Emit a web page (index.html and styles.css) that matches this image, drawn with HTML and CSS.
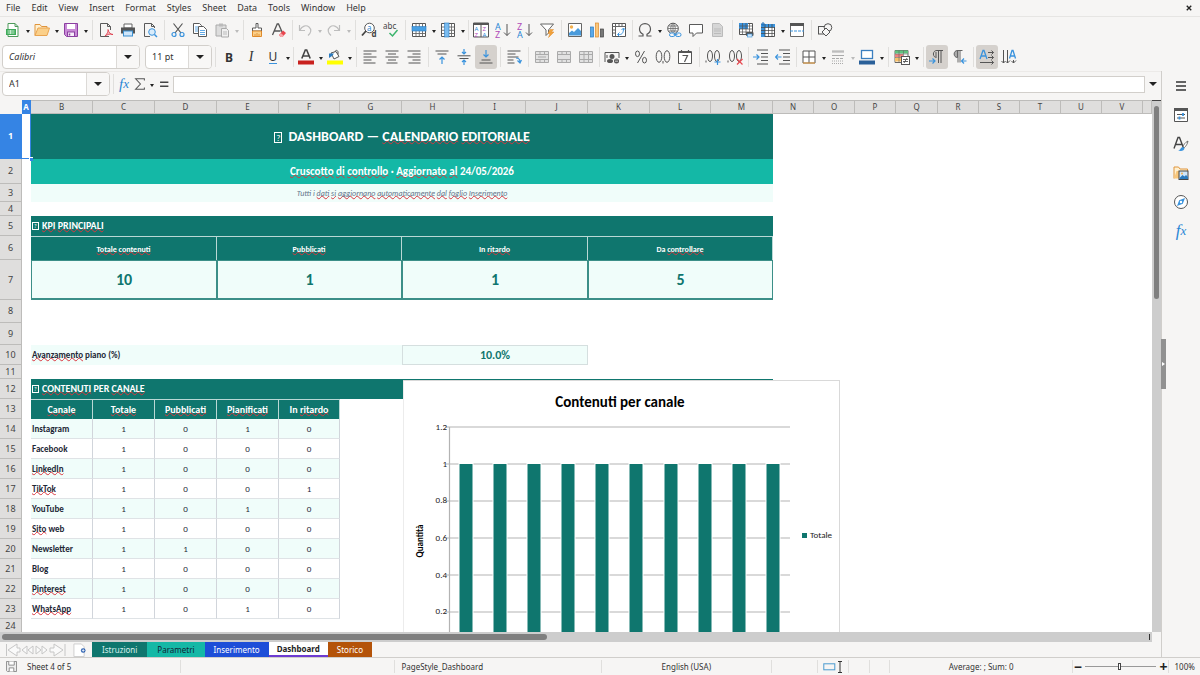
FILE: index.html
```
<!DOCTYPE html>
<html lang="it">
<head>
<meta charset="utf-8">
<title>Dashboard - Calendario editoriale</title>
<link rel="stylesheet" href="styles.css">
</head>
<body>
<svg class="defs" aria-hidden="true">
  <symbol id="i-new" viewBox="0 0 16 16"><path d="M3 1.500h7l3 3v10H3z" fill="#fff" stroke="#4e9a5b"/><path d="M10 1.500v3h3" fill="none" stroke="#4e9a5b"/><rect x="1" y="7" width="10" height="6" fill="#3faa5a"/><path d="M2.500 9h7M2.500 11h7M5.500 8v4" stroke="#c8ecd0"/></symbol>
  <symbol id="i-open" viewBox="0 0 16 16"><path d="M1 13.500v-11h5l1.500 2H13v2" fill="#fff0d0" stroke="#e0953d"/><path d="M1 13.500l3-7.500h11.500l-2.500 7.500z" fill="#fbd08a" stroke="#e9a450"/></symbol>
  <symbol id="i-save" viewBox="0 0 16 16"><path d="M1.500 1.500h13v13h-11l-2-2z" fill="#c88ad6" stroke="#8b3fa0"/><rect x="4" y="2" width="8" height="5" fill="#fff"/><rect x="4.500" y="10" width="7" height="4.500" fill="#f7eefa" stroke="#8b3fa0"/><path d="M6.500 11.500v2" stroke="#8b3fa0" stroke-width="1.500"/></symbol>
  <symbol id="i-pdf" viewBox="0 0 16 16"><path d="M11 14.500H2.500v-13h7l3 3V8M9.500 1.500v3h3" fill="none" stroke="#5a5a5a"/><path d="M7 14c2-2 3.500-4.500 3-6.500 1 3.500 2.500 5 5 5-3-1-5.500 0-8 1.500z" fill="#f7b8bd" stroke="#dc3545" stroke-width=".8"/></symbol>
  <symbol id="i-print" viewBox="0 0 16 16"><path d="M4 2h8v4H4z" fill="#fff" stroke="#666"/><path d="M1 5.500h14v6H1z" fill="#555"/><rect x="3.500" y="9" width="9" height="5" fill="#cfe6fa" stroke="#3a8fd0"/></symbol>
  <symbol id="i-preview" viewBox="0 0 16 16"><path d="M8 14.500H2.500v-13h7l3 3V6M9.500 1.500v3h3" fill="none" stroke="#5a5a5a"/><circle cx="10" cy="10" r="3.300" fill="#d9ecfb" stroke="#3a93dd"/><path d="M12.500 12.500l2.500 2.500" stroke="#3a93dd" stroke-width="1.500"/></symbol>
  <symbol id="i-cut" viewBox="0 0 16 16"><path d="M3.500 1.500l7.500 9.500M12.500 1.500L5 11" fill="none" stroke="#555" stroke-width="1.200"/><circle cx="4" cy="12.500" r="2" fill="none" stroke="#3a93dd" stroke-width="1.200"/><circle cx="12" cy="12.500" r="2" fill="none" stroke="#3a93dd" stroke-width="1.200"/></symbol>
  <symbol id="i-copy" viewBox="0 0 16 16"><path d="M1.500 1.500h6l2 2v8h-8z" fill="#fff" stroke="#5a5a5a"/><path d="M6.500 4.500h5l3 3v7h-8z" fill="#fff" stroke="#5a5a5a"/><path d="M3 5h3M3 7h3M3 9h3M8 8.500h5M8 10.500h5M8 12.500h5" stroke="#3a93dd" stroke-width=".8"/></symbol>
  <symbol id="i-paste" viewBox="0 0 16 16"><path d="M2 3h10v11H2z" fill="#ddd" stroke="#aaa"/><rect x="5" y="1.500" width="4" height="3" fill="#bbb"/><path d="M7.500 6.500h5l2 2v6.500h-7z" fill="#f0f0f0" stroke="#aaa"/><path d="M9 10h4M9 12h4" stroke="#bbb"/></symbol>
  <symbol id="i-clone" viewBox="0 0 16 16"><path d="M7 1.500h2V6h3.500v3h-9V6H7z" fill="#fff" stroke="#5a5a5a"/><path d="M3.500 9h9v5.500h-9z" fill="#fbd08a" stroke="#e08a2a"/><path d="M6 12v2.500M8 11v3.500M10 12v2.500" stroke="#e08a2a" stroke-width=".8"/></symbol>
  <symbol id="i-clear" viewBox="0 0 16 16"><path d="M1.500 13L6.200 2h1.300l4 9M3.500 9h6" fill="none" stroke="#555" stroke-width="1.300"/><path d="M8 13l4-4.500 3 2.500-3.500 4H9.500z" fill="#e8474f"/><path d="M8 13l1.700-2 3 2.500-1.200 1.500h-2z" fill="#f7a7ab"/></symbol>
  <symbol id="i-undo" viewBox="0 0 16 16"><path d="M2.500 3v5.500H8M3 8c2-4 6-5.500 9-3s2 6-1 8.500" fill="none" stroke="#bdbdbd" stroke-width="1.200"/></symbol>
  <symbol id="i-redo" viewBox="0 0 16 16"><path d="M13.500 3v5.500H8M13 8C11 4 7 2.500 4 5s-2 6 1 8.500" fill="none" stroke="#bdbdbd" stroke-width="1.200"/></symbol>
  <symbol id="i-find" viewBox="0 0 16 16"><circle cx="8.500" cy="6" r="4.800" fill="#fff" stroke="#555"/><path d="M5 9l-4 4.500" stroke="#444" stroke-width="1.800"/><text x="6" y="8.500" class="gl blue">a</text><text x="10.500" y="15" class="gl b">d</text></symbol>
  <symbol id="i-spell" viewBox="0 0 16 16"><text x="0" y="7" class="gl">abc</text><path d="M6.500 11l3 3 5-6" fill="none" stroke="#3bb46c" stroke-width="1.500"/></symbol>
  <symbol id="i-row" viewBox="0 0 16 16"><path d="M1.500 1.500h13v13h-13z" fill="#fff" stroke="#555"/><path d="M5 1.500v13M8.300 1.500v13M11.500 1.500v13M1.500 11.500h13" stroke="#666" stroke-width=".9"/><rect x="1" y="4.500" width="14" height="4.500" fill="#48a0e4" stroke="#2a7bc0" stroke-width=".6"/></symbol>
  <symbol id="i-col" viewBox="0 0 16 16"><path d="M1.500 1.500h13v13h-13z" fill="#fff" stroke="#555"/><path d="M1.500 5h13M1.500 8.300h13M1.500 11.500h13M11.500 1.500v13" stroke="#666" stroke-width=".9"/><rect x="4.500" y="1" width="4.500" height="14" fill="#7abcf0" stroke="#2a7bc0" stroke-width=".6"/></symbol>
  <symbol id="i-sort" viewBox="0 0 16 16"><path d="M.5 1h15v14H.5z" fill="#fff" stroke="#555"/><path d="M.5 1.500h15v1H.5zM8 2.500v12.500" fill="#555" stroke="#555"/><text x="1.500" y="9" class="gs blue">A</text><text x="1.500" y="14.500" class="gs mag">Z</text><text x="9.500" y="9" class="gs mag">Z</text><text x="9.500" y="14.500" class="gs blue">A</text></symbol>
  <symbol id="i-az" viewBox="0 0 16 16"><text x="0" y="7.500" class="ga blue">A</text><text x="0" y="15.500" class="ga mag">Z</text><path d="M12 2v11.500M9 10.500L12 13.500l3-3" fill="none" stroke="#555"/></symbol>
  <symbol id="i-za" viewBox="0 0 16 16"><text x="0" y="7.500" class="ga mag">Z</text><text x="0" y="15.500" class="ga blue">A</text><path d="M12 2v11.500M9 10.500L12 13.500l3-3" fill="none" stroke="#555"/></symbol>
  <symbol id="i-filter" viewBox="0 0 16 16"><path d="M1.500 2h13L9.500 8v3L7 13.500V8z" fill="#fff" stroke="#666"/><path d="M11 7.500h3.500L12.500 10H15l-5.500 5.500 1.500-4H9z" fill="#f0a23c" stroke="#e08a2a" stroke-width=".5"/></symbol>
  <symbol id="i-image" viewBox="0 0 16 16"><path d="M1.500 1.500h13v13h-13z" fill="#fff" stroke="#666"/><circle cx="4.500" cy="5" r="1.700" fill="#f3b04e"/><path d="M2 13.500V11l3-2.500 2 1.500 4-4 3 3v4.500z" fill="#4a9bdb"/></symbol>
  <symbol id="i-chart" viewBox="0 0 16 16"><rect x="1.500" y="5" width="3" height="10" fill="#5aa9ea" stroke="#2a7bc0" stroke-width=".7"/><rect x="6.500" y="1" width="3" height="14" fill="#f9c77c" stroke="#e08a2a" stroke-width=".7"/><rect x="11.500" y="7" width="3" height="8" fill="#777" stroke="#444" stroke-width=".7"/></symbol>
  <symbol id="i-pivot" viewBox="0 0 16 16"><path d="M1.500 1.500h13v13h-13z" fill="#fff" stroke="#555"/><path d="M1.500 4.500h13M4.500 1.500v13M8 1.500v3M11 1.500v3M1.500 8h3M1.500 11h3" stroke="#666"/><path d="M7 12.500c4 .5 5.500-1.500 5.500-6M8.500 10.500l-2 2 2 2M10.500 8l2-2 2 2" fill="none" stroke="#3a93dd"/></symbol>
  <symbol id="i-omega" viewBox="0 0 16 16"><path d="M1.500 14H6v-1.800C3.500 11 2.500 9 2.500 7c0-3 2.300-5.300 5.500-5.300S13.500 4 13.500 7c0 2-1 4-3.500 5.200V14h4.500" fill="none" stroke="#555" stroke-width="1.200"/></symbol>
  <symbol id="i-link" viewBox="0 0 16 16"><circle cx="7" cy="6.500" r="5.300" fill="#fff" stroke="#555"/><path d="M1.700 6.500h10.600M2.500 4h9M2.500 9h9M7 1.200v10.600M7 1.200c-3 3-3 7.500 0 10.600M7 1.200c3 3 3 7.500 0 10.600" fill="none" stroke="#666" stroke-width=".8"/><rect x="3.500" y="11" width="5.500" height="3.500" rx="1.700" fill="#f6f5f4" stroke="#3a93dd"/><rect x="9.500" y="11" width="5.500" height="3.500" rx="1.700" fill="#f6f5f4" stroke="#3a93dd"/><path d="M7.500 12.700h4" stroke="#3a93dd"/></symbol>
  <symbol id="i-comment" viewBox="0 0 16 16"><path d="M1.500 2.500h13v8.500H8.500L5 14.500V11H1.500z" fill="#fff" stroke="#5a5a5a"/></symbol>
  <symbol id="i-header" viewBox="0 0 16 16"><path d="M2.500 1.500h7l3 3v10h-10z" fill="#d6d6d6" stroke="#bbb"/><path d="M4 7h7M4 9h7M4 11.500h7" stroke="#bbb"/></symbol>
  <symbol id="i-parea" viewBox="0 0 16 16"><path d="M1.500 1.500h13v11h-13z" fill="#fff" stroke="#555"/><rect x="1" y="1" width="9" height="6" fill="#3a93dd"/><path d="M1 4h14M1 7h14M1 10h14M4.500 1v12M8 1v12M11.500 1v12" stroke="#555" stroke-width=".7"/><rect x="8" y="10" width="7.500" height="4" rx="1" fill="#555"/><rect x="9.500" y="12" width="4.500" height="3" fill="#cfe6fa" stroke="#3a93dd" stroke-width=".6"/></symbol>
  <symbol id="i-freeze" viewBox="0 0 16 16"><path d="M1.500 2.500h13v12h-13z" fill="#fff" stroke="#555"/><path d="M1 2h14v3.500H5V15H1z" fill="#3a93dd"/><path d="M1 5.500h14M1 8.500h14M1 11.500h14M5 2v13M8.500 2v13M12 2v13" stroke="#444" stroke-width=".7"/><path d="M3 0v4M1 2h4" stroke="#1d6fb8"/></symbol>
  <symbol id="i-split" viewBox="0 0 16 16"><path d="M1.500 1.500h13v13h-13z" fill="#fff" stroke="#666"/><rect x="1" y="1" width="14" height="3" fill="#555"/><path d="M1 9h14" stroke="#3a93dd" stroke-dasharray="3 1"/></symbol>
  <symbol id="i-draw" viewBox="0 0 16 16"><rect x="1.500" y="4.500" width="7.500" height="7.500" fill="#f6f5f4" stroke="#555"/><circle cx="11" cy="5.500" r="3.800" fill="#f6f5f4" stroke="#555"/><path d="M9 6l4 4-4 4-4-4z" fill="#f6f5f4" stroke="#555"/></symbol>
  <symbol id="i-fcolor" viewBox="0 0 16 16"><path d="M3.800 9.500L7.300 1h1.400l3.500 8.500M5 7h6" fill="none" stroke="#444" stroke-width="1.600"/><rect x="0" y="11.500" width="16" height="4" fill="#c9211e"/></symbol>
  <symbol id="i-hl" viewBox="0 0 16 16"><path d="M4 4l5-1.500 3 5L7 10z" fill="#fff" stroke="#555"/><path d="M8 2.500c1-2 3-1 3 .5v2.500" fill="none" stroke="#555"/><path d="M2 9V4.500h5l-2 2.500z" fill="#2a7bc0"/><rect x="0" y="11.500" width="16" height="4" fill="#ff0"/></symbol>
  <symbol id="i-al" viewBox="0 0 16 16"><path d="M1.500 2h13M1.500 5h8M1.500 8h13M1.500 11h8M1.500 14h12" stroke="#555"/></symbol>
  <symbol id="i-ac" viewBox="0 0 16 16"><path d="M1.500 2h13M4 5h8M1.500 8h13M4 11h8M2.500 14h11" stroke="#555"/></symbol>
  <symbol id="i-ar" viewBox="0 0 16 16"><path d="M1.500 2h13M6.500 5h8M1.500 8h13M6.500 11h8M2.500 14h12" stroke="#555"/></symbol>
  <symbol id="i-vt" viewBox="0 0 16 16"><path d="M1.500 2h13M3.500 5h9" stroke="#555"/><path d="M8 15V8M5.500 10.500L8 8l2.500 2.500" fill="none" stroke="#3a93dd" stroke-width="1.200"/></symbol>
  <symbol id="i-vm" viewBox="0 0 16 16"><path d="M1.500 6.800h13M3.500 9.500h9" stroke="#555"/><path d="M8 0v5M6 3l2 2 2-2M8 16v-5M6 13l2-2 2 2" fill="none" stroke="#3a93dd" stroke-width="1.200"/></symbol>
  <symbol id="i-vb" viewBox="0 0 16 16"><path d="M1.500 14h13M3.500 11h9" stroke="#555"/><path d="M8 1v7M5.500 5.500L8 8l2.500-2.500" fill="none" stroke="#3a93dd" stroke-width="1.200"/></symbol>
  <symbol id="i-wrap" viewBox="0 0 16 16"><path d="M1.500 2h13M1.500 5h8M1.500 8h11M1.500 11h6M1.500 14h7" stroke="#555"/><path d="M10 9c3 0 4 1 4 4M11.500 11.500l2.500 2.500 1.500-3" fill="none" stroke="#3a93dd" stroke-width="1.200"/></symbol>
  <symbol id="i-m1" viewBox="0 0 16 16"><path d="M1.500 2.500h13v11h-13zM1.500 5.500h13M1.500 10.500h13M6 2.500v3M10.500 2.500v3M6 10.500v3M10.500 10.500v3M4 8h8" fill="#e2e2e2" stroke="#aaa"/></symbol>
  <symbol id="i-m2" viewBox="0 0 16 16"><path d="M1.500 2.500h13v11h-13zM1.500 5.500h13M1.500 10.500h13M6 2.500v3M10.500 2.500v3M6 10.500v3M10.500 10.500v3" fill="#e2e2e2" stroke="#aaa"/></symbol>
  <symbol id="i-m3" viewBox="0 0 16 16"><path d="M1.500 2.500h13v11h-13zM1.500 5.500h13M1.500 10.500h13M6 2.500v11M10.500 2.500v11" fill="#e2e2e2" stroke="#aaa"/></symbol>
  <symbol id="i-cur" viewBox="0 0 16 16"><path d="M1 13V3.500h14V9" fill="none" stroke="#555"/><circle cx="8" cy="7.500" r="2.500" fill="#555"/><path d="M3 6v3" stroke="#555"/><ellipse cx="6" cy="12" rx="3" ry="2" fill="#555"/><ellipse cx="12.500" cy="12" rx="2.500" ry="2.500" fill="#555"/><path d="M11 11h3M11 12.500h3" stroke="#ddd" stroke-width=".6"/></symbol>
  <symbol id="i-pct" viewBox="0 0 16 16"><ellipse cx="4.500" cy="4.800" rx="2" ry="2.800" fill="none" stroke="#555"/><ellipse cx="11.500" cy="11.200" rx="2" ry="2.800" fill="none" stroke="#555"/><path d="M11.500 2L4.500 14" stroke="#555"/></symbol>
  <symbol id="i-num" viewBox="0 0 16 16"><ellipse cx="4" cy="7.500" rx="2.800" ry="5.800" fill="none" stroke="#555"/><ellipse cx="12" cy="7.500" rx="2.800" ry="5.800" fill="none" stroke="#555"/><path d="M8 12v2.500" stroke="#555"/></symbol>
  <symbol id="i-date" viewBox="0 0 16 16"><path d="M1.500 2.500h13v12h-13z" fill="#fff" stroke="#555"/><path d="M1.500 3.500h13M4.500 1v3M11.500 1v3" stroke="#555" stroke-width="1.200"/><path d="M5.500 6.500h5L7.500 13" fill="none" stroke="#555" stroke-width="1.200"/></symbol>
  <symbol id="i-dadd" viewBox="0 0 16 16"><path d="M1 11.500v2" stroke="#555"/><ellipse cx="5" cy="7" rx="2.500" ry="5.500" fill="none" stroke="#555"/><ellipse cx="12" cy="7" rx="2.500" ry="5.500" fill="none" stroke="#555"/><path d="M12.500 10v6M9.500 13h6" stroke="#3a93dd" stroke-width="1.200"/></symbol>
  <symbol id="i-ddel" viewBox="0 0 16 16"><path d="M1 11.500v2" stroke="#555"/><ellipse cx="5" cy="7" rx="2.500" ry="5.500" fill="none" stroke="#555"/><ellipse cx="12" cy="7" rx="2.500" ry="5.500" fill="none" stroke="#555"/><path d="M10 10l5.500 5.500M15.500 10L10 15.500" stroke="#e8474f" stroke-width="1.200"/></symbol>
  <symbol id="i-ind" viewBox="0 0 16 16"><path d="M4 1h11M8 4.500h7M8 8h7M8 11.500h7M4 15h11" stroke="#555"/><path d="M0 8h6M3.500 5.500L6 8l-2.500 2.500" fill="none" stroke="#3a93dd" stroke-width="1.200"/></symbol>
  <symbol id="i-out" viewBox="0 0 16 16"><path d="M4 1h11M8 4.500h7M8 8h7M8 11.500h7M4 15h11" stroke="#555"/><path d="M6.500 8h-6M3 5.500L.5 8 3 10.500" fill="none" stroke="#3a93dd" stroke-width="1.200"/></symbol>
  <symbol id="i-bord" viewBox="0 0 16 16"><path d="M2 2h12v12H2zM8 2v12M2 8h12" fill="#fff" stroke="#555"/><path d="M2 14h12" stroke="#f0a23c"/></symbol>
  <symbol id="i-lst" viewBox="0 0 16 16"><path d="M2 2h12M2 3h12" stroke="#aaa"/><path d="M2 6.500h12" stroke="#aaa"/><path d="M2 9.500h12" stroke="#aaa" stroke-dasharray="3 1"/><path d="M2 12h12M2 14.500h12" stroke="#aaa" stroke-dasharray="1 1"/></symbol>
  <symbol id="i-bcol" viewBox="0 0 16 16"><rect x="2.500" y="1.500" width="11" height="8" fill="#fff" stroke="#3a7fc0" stroke-width="1.300"/><rect x="0" y="11.500" width="16" height="4" fill="#2a6099"/></symbol>
  <symbol id="i-cond" viewBox="0 0 16 16"><path d="M1 1.500h13v12H1z" fill="#fff" stroke="#666"/><rect x="1" y="1.500" width="13" height="3" fill="#5fc27e"/><rect x="1" y="5" width="8" height="3" fill="#f0807f"/><rect x="1" y="8.500" width="6" height="4" fill="#f8c16a"/><path d="M5 1.500v12M9.500 1.500v6M1 5h13M1 8.500h7" stroke="#666" stroke-width=".6"/><rect x="7.500" y="7.500" width="8" height="8" fill="#fff" stroke="#555"/><path d="M9 10.500h5M9 12.500h5M13 9l-3 5" stroke="#555" stroke-width=".9"/></symbol>
  <symbol id="i-ltr" viewBox="0 0 16 16"><path d="M7.500 8.500C3.500 8.500 3 1.500 8 1.500h6M9.500 1.500v12.500M12 1.500v12.500M7 3v5" fill="none" stroke="#555"/><path d="M0 12h6M3.500 9.500L6 12l-2.500 2.500" fill="none" stroke="#3a93dd" stroke-width="1.200"/></symbol>
  <symbol id="i-rtl" viewBox="0 0 16 16"><path d="M6.500 8.500C2 8.500 2 1.500 6.500 1.500z" fill="#aaa" stroke="#666"/><path d="M6 1.500h5.500M7 1.500v12M9 1.500v12" fill="none" stroke="#666"/><path d="M15.500 12h-5M13 9.500L10.500 12l2.500 2.500" fill="none" stroke="#3a93dd" stroke-width="1.200"/></symbol>
  <symbol id="i-tdh" viewBox="0 0 16 16"><path d="M1 10L4 1.500h1L8 10M2.200 7h4.600" fill="none" stroke="#3a93dd" stroke-width="1.300"/><path d="M9 3.500h5.500M12.500 1.500l2 2-2 2M9 8.500h5.500M12.500 6.500l2 2-2 2M1 13.500h13.500M12.500 11.500l2 2-2 2" fill="none" stroke="#555"/></symbol>
  <symbol id="i-tdv" viewBox="0 0 16 16"><path d="M8.500 9.500L11 1.500h1l2.500 8M9.500 7h4.500" fill="none" stroke="#3a93dd" stroke-width="1.300"/><path d="M2.500 1v13M.5 12l2 2 2-2M6.500 1v13M5 12.500L6.500 14 9 11.500M12.500 11v3M10.500 12l2 2 2.500-2.500" fill="none" stroke="#555"/></symbol>
  <symbol id="i-sum" viewBox="0 0 16 16"><path d="M13 4V2H3l5.500 6L3 14h10v-2" fill="none" stroke="#555" stroke-width="1.200"/></symbol>
  <symbol id="i-eq" viewBox="0 0 16 16"><path d="M3.500 6h9.500M3.500 10.500h9.500" stroke="#444" stroke-width="1.600"/></symbol>
  <symbol id="i-ham" viewBox="0 0 16 16"><path d="M3 4h10M3 8h10M3 12h10" stroke="#333" stroke-width="1.500"/></symbol>
  <symbol id="i-prop" viewBox="0 0 16 16"><path d="M1.500 1.500h13v13h-13z" fill="#fff" stroke="#555"/><path d="M1 2.500h14" stroke="#555" stroke-width="3"/><path d="M4 7.500h8M4 11h8" stroke="#555"/><path d="M10 6v3M6.500 9.500v3" stroke="#3a93dd" stroke-width="1.800"/></symbol>
  <symbol id="i-style" viewBox="0 0 16 16"><path d="M1 12.500L5 1.500h1.500L10.500 12M2.500 8.500h6" fill="none" stroke="#444" stroke-width="1.400"/><path d="M15 5c-3 1.500-4.500 4-5 5.500l1.500 1C13 10 14.500 8 15 5z" fill="#fff" stroke="#555" stroke-width=".8"/><path d="M10 11c-2.500 0-2 3-5 3.500 3 1 6.500.5 6.500-2.500z" fill="#3a93dd"/></symbol>
  <symbol id="i-gal" viewBox="0 0 16 16"><path d="M1 13.500V2h4.500L7 4h7.500v2" fill="#fff0d0" stroke="#e0953d"/><path d="M1 13.500L3.500 6H6v7.500z" fill="#f9c77c"/><rect x="6" y="6" width="9" height="8.500" fill="#cfe6fa" stroke="#444"/><path d="M6.500 13l3-3 2 1.500 1.500-1.500 2 2v2H6.500z" fill="#2a7bc0"/><circle cx="9" cy="8.500" r="1" fill="#f3b04e"/></symbol>
  <symbol id="i-nav" viewBox="0 0 16 16"><circle cx="8" cy="8" r="6.500" fill="#fff" stroke="#555"/><path d="M12 4L9.800 9.800 4 12l2.200-5.800z" fill="#3a93dd"/><circle cx="8" cy="8" r="1.200" fill="#fff"/></symbol>
</svg>

<nav class="menubar" aria-label="Menu">
  <button>File</button><button>Edit</button><button>View</button><button>Insert</button><button>Format</button><button>Styles</button><button>Sheet</button><button>Data</button><button>Tools</button><button>Window</button><button>Help</button>
  <button class="close" aria-label="Close document"><svg viewBox="0 0 8 8"><path d="M1 1l6 6M7 1L1 7" stroke="#222" stroke-width="1.800"/></svg></button>
</nav>

<div class="toolbar" role="toolbar" aria-label="Standard">
  <button class="tb" aria-label="New"><svg><use href="#i-new"/></svg></button><button class="dd" aria-label="New options"></button>
  <button class="tb" aria-label="Open"><svg><use href="#i-open"/></svg></button><button class="dd" aria-label="Open options"></button>
  <button class="tb" aria-label="Save"><svg><use href="#i-save"/></svg></button><button class="dd" aria-label="Save options"></button>
  <span class="sep"></span>
  <button class="tb" aria-label="Export as PDF"><svg><use href="#i-pdf"/></svg></button>
  <button class="tb" aria-label="Print"><svg><use href="#i-print"/></svg></button>
  <button class="tb" aria-label="Print preview"><svg><use href="#i-preview"/></svg></button>
  <span class="sep"></span>
  <button class="tb" aria-label="Cut"><svg><use href="#i-cut"/></svg></button>
  <button class="tb" aria-label="Copy"><svg><use href="#i-copy"/></svg></button>
  <button class="tb" aria-label="Paste"><svg><use href="#i-paste"/></svg></button><button class="dd off" aria-label="Paste options"></button>
  <span class="sep"></span>
  <button class="tb" aria-label="Clone formatting"><svg><use href="#i-clone"/></svg></button>
  <button class="tb" aria-label="Clear formatting"><svg><use href="#i-clear"/></svg></button>
  <span class="sep tight"></span>
  <button class="tb" aria-label="Undo"><svg><use href="#i-undo"/></svg></button><button class="dd off" aria-label="Undo list"></button>
  <button class="tb" aria-label="Redo"><svg><use href="#i-redo"/></svg></button><button class="dd off" aria-label="Redo list"></button>
  <span class="sep"></span>
  <button class="tb" aria-label="Find and replace"><svg><use href="#i-find"/></svg></button>
  <button class="tb" aria-label="Spelling"><svg><use href="#i-spell"/></svg></button>
  <span class="sep"></span>
  <button class="tb" aria-label="Row"><svg><use href="#i-row"/></svg></button><button class="dd" aria-label="Row options"></button>
  <button class="tb" aria-label="Column"><svg><use href="#i-col"/></svg></button><button class="dd" aria-label="Column options"></button>
  <span class="sep tight"></span>
  <button class="tb" aria-label="Sort"><svg><use href="#i-sort"/></svg></button>
  <button class="tb" aria-label="Sort ascending"><svg><use href="#i-az"/></svg></button>
  <button class="tb" aria-label="Sort descending"><svg><use href="#i-za"/></svg></button>
  <button class="tb" aria-label="AutoFilter"><svg><use href="#i-filter"/></svg></button>
  <span class="sep"></span>
  <button class="tb" aria-label="Image"><svg><use href="#i-image"/></svg></button>
  <button class="tb" aria-label="Chart"><svg><use href="#i-chart"/></svg></button>
  <button class="tb" aria-label="Pivot table"><svg><use href="#i-pivot"/></svg></button>
  <span class="sep tight"></span>
  <button class="tb" aria-label="Symbol"><svg><use href="#i-omega"/></svg></button><button class="dd" aria-label="Symbol options"></button>
  <button class="tb" aria-label="Hyperlink"><svg><use href="#i-link"/></svg></button>
  <button class="tb" aria-label="Comment"><svg><use href="#i-comment"/></svg></button>
  <button class="tb" aria-label="Headers and footers"><svg><use href="#i-header"/></svg></button>
  <span class="sep"></span>
  <button class="tb" aria-label="Print area"><svg><use href="#i-parea"/></svg></button>
  <button class="tb" aria-label="Freeze"><svg><use href="#i-freeze"/></svg></button><button class="dd" aria-label="Freeze options"></button>
  <button class="tb" aria-label="Split window"><svg><use href="#i-split"/></svg></button>
  <span class="sep"></span>
  <button class="tb" aria-label="Draw functions"><svg><use href="#i-draw"/></svg></button>
</div>

<div class="toolbar" role="toolbar" aria-label="Formatting">
  <div class="combo font"><input type="text" aria-label="Font name" value="Calibri"><button aria-label="Font list"></button></div>
  <div class="combo size"><input type="text" aria-label="Font size" value="11 pt"><button aria-label="Size list"></button></div>
  <span class="sep"></span>
  <button class="tb bold" aria-label="Bold">B</button>
  <button class="tb italic" aria-label="Italic">I</button>
  <button class="tb under" aria-label="Underline"><span>U</span></button><button class="dd" aria-label="Underline options"></button>
  <span class="sep tight"></span>
  <button class="tb" aria-label="Font color"><svg><use href="#i-fcolor"/></svg></button><button class="dd" aria-label="Font color options"></button>
  <button class="tb" aria-label="Background color"><svg><use href="#i-hl"/></svg></button><button class="dd" aria-label="Background color options"></button>
  <span class="sep"></span>
  <button class="tb" aria-label="Align left"><svg><use href="#i-al"/></svg></button>
  <button class="tb" aria-label="Center"><svg><use href="#i-ac"/></svg></button>
  <button class="tb" aria-label="Align right"><svg><use href="#i-ar"/></svg></button>
  <span class="sep"></span>
  <button class="tb" aria-label="Align top"><svg><use href="#i-vt"/></svg></button>
  <button class="tb" aria-label="Center vertically"><svg><use href="#i-vm"/></svg></button>
  <button class="tb on" aria-label="Align bottom"><svg><use href="#i-vb"/></svg></button>
  <span class="sep"></span>
  <button class="tb" aria-label="Wrap text"><svg><use href="#i-wrap"/></svg></button>
  <span class="sep"></span>
  <button class="tb" aria-label="Merge and center"><svg><use href="#i-m1"/></svg></button>
  <button class="tb" aria-label="Merge"><svg><use href="#i-m2"/></svg></button>
  <button class="tb" aria-label="Unmerge"><svg><use href="#i-m3"/></svg></button>
  <span class="sep tight"></span>
  <button class="tb" aria-label="Currency"><svg><use href="#i-cur"/></svg></button><button class="dd" aria-label="Currency options"></button>
  <button class="tb" aria-label="Percent"><svg><use href="#i-pct"/></svg></button>
  <button class="tb" aria-label="Number"><svg><use href="#i-num"/></svg></button>
  <button class="tb" aria-label="Date"><svg><use href="#i-date"/></svg></button>
  <span class="sep"></span>
  <button class="tb" aria-label="Add decimal place"><svg><use href="#i-dadd"/></svg></button>
  <button class="tb" aria-label="Delete decimal place"><svg><use href="#i-ddel"/></svg></button>
  <span class="sep tight"></span>
  <button class="tb" aria-label="Increase indent"><svg><use href="#i-ind"/></svg></button>
  <button class="tb" aria-label="Decrease indent"><svg><use href="#i-out"/></svg></button>
  <span class="sep tight"></span>
  <button class="tb" aria-label="Borders"><svg><use href="#i-bord"/></svg></button><button class="dd" aria-label="Border options"></button>
  <button class="tb" aria-label="Border style"><svg><use href="#i-lst"/></svg></button><button class="dd off" aria-label="Border style options"></button>
  <button class="tb" aria-label="Border color"><svg><use href="#i-bcol"/></svg></button><button class="dd" aria-label="Border color options"></button>
  <span class="sep"></span>
  <button class="tb" aria-label="Conditional formatting"><svg><use href="#i-cond"/></svg></button><button class="dd" aria-label="Conditional options"></button>
  <span class="sep"></span>
  <button class="tb on" aria-label="Left to right"><svg><use href="#i-ltr"/></svg></button>
  <button class="tb" aria-label="Right to left"><svg><use href="#i-rtl"/></svg></button>
  <span class="sep"></span>
  <button class="tb on" aria-label="Text direction horizontal"><svg><use href="#i-tdh"/></svg></button>
  <button class="tb" aria-label="Text direction vertical"><svg><use href="#i-tdv"/></svg></button>
</div>

<div class="main">
  <div class="work">
    <div class="formula">
      <div class="combo name"><input type="text" aria-label="Name box" value="A1"><button aria-label="Name list"></button></div>
      <span class="sep"></span>
      <button class="ft fx" aria-label="Function wizard">f<sub>x</sub></button>
      <button class="ft" aria-label="Select function"><svg><use href="#i-sum"/></svg></button><button class="dd" aria-label="Function options"></button>
      <button class="ft wide" aria-label="Formula"><svg><use href="#i-eq"/></svg></button>
      <input class="line" type="text" aria-label="Input line">
      <button class="expand" aria-label="Expand formula bar"></button>
    </div>

    <div class="sheetrow">
      <div class="sheet">
        <table class="grid">
          <colgroup><col class="w22"><col class="w9"><col class="w62" span="4"><col class="w61"><col class="w62" span="5"><col class="w61"><col class="w62"><col class="w41" span="3"><col class="w42"><col class="w41" span="5"><col></colgroup>
          <thead><tr><th class="corner"></th><th class="sel">A</th><th>B</th><th>C</th><th>D</th><th>E</th><th>F</th><th>G</th><th>H</th><th>I</th><th>J</th><th>K</th><th>L</th><th>M</th><th>N</th><th>O</th><th>P</th><th>Q</th><th>R</th><th>S</th><th>T</th><th>U</th><th>V</th><th></th></tr></thead>
          <tbody>
            <tr class="h45"><th class="sel">1</th><td class="cursor"></td><td colspan="12" class="title"><span class="tofu">?</span> DASHBOARD — <u>CALENDARIO</u> <u>EDITORIALE</u></td><td colspan="10"></td></tr>
            <tr class="h25"><th>2</th><td></td><td colspan="12" class="subtitle"><u>Cruscotto</u> <u>di</u> <u>controllo</u> · <u>Aggiornato</u> <u>al</u> 24/05/2026</td><td colspan="10"></td></tr>
            <tr class="h18"><th>3</th><td></td><td colspan="12" class="note">Tutti i <u>dati</u> <u>si</u> <u>aggiornano</u> <u>automaticamente</u> <u>dal</u> <u>foglio</u> <u>Inserimento</u></td><td colspan="10"></td></tr>
            <tr class="h14"><th>4</th><td colspan="23"></td></tr>
            <tr class="h20"><th>5</th><td></td><td colspan="12" class="section"><span class="tofu">?</span> <u>KPI</u> <u>PRINCIPALI</u></td><td colspan="10"></td></tr>
            <tr class="h24"><th>6</th><td></td><td colspan="3" class="kl"><u>Totale</u> <u>contenuti</u></td><td colspan="3" class="kl"><u>Pubblicati</u></td><td colspan="3" class="kl">In <u>ritardo</u></td><td colspan="3" class="kl">Da <u>controllare</u></td><td colspan="10"></td></tr>
            <tr class="h40"><th>7</th><td></td><td colspan="3" class="kv">10</td><td colspan="3" class="kv">1</td><td colspan="3" class="kv">1</td><td colspan="3" class="kv">5</td><td colspan="10"></td></tr>
            <tr class="h23"><th>8</th><td colspan="23"></td></tr>
            <tr class="h22"><th>9</th><td colspan="23"></td></tr>
            <tr class="h20"><th>10</th><td></td><td colspan="6" class="pl"><u>Avanzamento</u> piano (%)</td><td colspan="3" class="pv">10.0%</td><td colspan="13"></td></tr>
            <tr class="h14"><th>11</th><td colspan="23"></td></tr>
            <tr class="h20"><th>12</th><td></td><td colspan="12" class="section"><span class="tofu">?</span> <u>CONTENUTI</u> PER <u>CANALE</u></td><td colspan="10"></td></tr>
            <tr class="h20"><th>13</th><td></td><td class="ch"><u>Canale</u></td><td class="ch"><u>Totale</u></td><td class="ch"><u>Pubblicati</u></td><td class="ch"><u>Pianificati</u></td><td class="ch">In <u>ritardo</u></td><td colspan="17"></td></tr>
            <tr class="h20 alt"><th>14</th><td></td><td class="cn">Instagram</td><td class="cv">1</td><td class="cv">0</td><td class="cv">1</td><td class="cv">0</td><td colspan="17"></td></tr>
            <tr class="h20"><th>15</th><td></td><td class="cn">Facebook</td><td class="cv">1</td><td class="cv">0</td><td class="cv">0</td><td class="cv">0</td><td colspan="17"></td></tr>
            <tr class="h20 alt"><th>16</th><td></td><td class="cn"><u>LinkedIn</u></td><td class="cv">1</td><td class="cv">0</td><td class="cv">0</td><td class="cv">0</td><td colspan="17"></td></tr>
            <tr class="h20"><th>17</th><td></td><td class="cn"><u>TikTok</u></td><td class="cv">1</td><td class="cv">0</td><td class="cv">0</td><td class="cv">1</td><td colspan="17"></td></tr>
            <tr class="h20 alt"><th>18</th><td></td><td class="cn">YouTube</td><td class="cv">1</td><td class="cv">0</td><td class="cv">1</td><td class="cv">0</td><td colspan="17"></td></tr>
            <tr class="h20"><th>19</th><td></td><td class="cn"><u>Sito</u> web</td><td class="cv">1</td><td class="cv">0</td><td class="cv">0</td><td class="cv">0</td><td colspan="17"></td></tr>
            <tr class="h20 alt"><th>20</th><td></td><td class="cn">Newsletter</td><td class="cv">1</td><td class="cv">1</td><td class="cv">0</td><td class="cv">0</td><td colspan="17"></td></tr>
            <tr class="h20"><th>21</th><td></td><td class="cn">Blog</td><td class="cv">1</td><td class="cv">0</td><td class="cv">0</td><td class="cv">0</td><td colspan="17"></td></tr>
            <tr class="h20 alt"><th>22</th><td></td><td class="cn"><u>Pinterest</u></td><td class="cv">1</td><td class="cv">0</td><td class="cv">0</td><td class="cv">0</td><td colspan="17"></td></tr>
            <tr class="h20"><th>23</th><td></td><td class="cn"><u>WhatsApp</u></td><td class="cv">1</td><td class="cv">0</td><td class="cv">1</td><td class="cv">0</td><td colspan="17"></td></tr>
            <tr class="h14"><th>24</th><td colspan="23"></td></tr>
          </tbody>
        </table>
        <span class="fill"></span>
        <svg class="chart" viewBox="0 0 437 300" role="img" aria-label="Contenuti per canale">
          <rect x="0" y=".5" width="436.500" height="310" fill="#fff" stroke="#d9d9d9"/>
          <path d="M43 47H387M43 84H387M43 121H387M43 158H387M43 195H387M43 232H387M46.500 47V300" fill="none" stroke="#b3b3b3" stroke-width="1.200"/>
          <g fill="#0f766e" stroke="#fff">
            <rect x="56" y="83.500" width="14" height="230"/><rect x="90" y="83.500" width="14" height="230"/><rect x="124" y="83.500" width="14" height="230"/><rect x="158" y="83.500" width="14" height="230"/><rect x="192" y="83.500" width="14" height="230"/><rect x="226" y="83.500" width="14" height="230"/><rect x="261" y="83.500" width="14" height="230"/><rect x="295" y="83.500" width="14" height="230"/><rect x="329" y="83.500" width="14" height="230"/><rect x="363" y="83.500" width="14" height="230"/>
          </g>
          <text x="217" y="27" class="ct">Contenuti per canale</text>
          <g class="ax"><text x="44" y="50">1.2</text><text x="44" y="87">1</text><text x="44" y="123">0.8</text><text x="44" y="161">0.6</text><text x="44" y="198">0.4</text><text x="44" y="234">0.2</text></g>
          <text class="ay" transform="translate(20 161) rotate(-90)">Quantità</text>
          <rect x="399" y="153" width="5" height="5" fill="#0f766e"/><text x="407" y="158" class="lg">Totale</text>
        </svg>
      </div>
      <div class="vscroll"><span class="vthumb"></span></div>
    </div>
    <div class="hscroll"><span class="hthumb"></span><span class="hend"></span></div>

    <div class="tabs" role="tablist">
      <svg class="nav" viewBox="0 0 62 14"><g fill="#fafafa" stroke="#c6c6c6"><path d="M1.500 1v12M12 1L3 7l9 6V9h3V5h-3zM22 3l-5 4 5 4zM28 3l-5 4 5 4zM37 3l5 4-5 4zM31 3l5 4-5 4zM49 1l9 6-9 6V9h-4V5h4zM60 1v12"/></g></svg>
      <button class="add" aria-label="Add sheet"><svg viewBox="0 0 14 14"><path d="M1 .5h8l3 3V14H1z" fill="#fff" stroke="#ccc"/><circle cx="11" cy="7.500" r="2.500" fill="#2a5fb0"/><path d="M11 6v3M9.500 7.500h3" stroke="#fff" stroke-width=".8"/></svg></button>
      <button class="tab t1" role="tab">Istruzioni</button><button class="tab t2" role="tab">Parametri</button><button class="tab t3" role="tab">Inserimento</button><button class="tab t4" role="tab" aria-selected="true">Dashboard</button><button class="tab t5" role="tab">Storico</button>
    </div>
  </div>

  <aside class="side" aria-label="Sidebar">
    <button aria-label="Sidebar settings"><svg><use href="#i-ham"/></svg></button>
    <button aria-label="Properties"><svg><use href="#i-prop"/></svg></button>
    <button aria-label="Styles"><svg><use href="#i-style"/></svg></button>
    <button aria-label="Gallery"><svg><use href="#i-gal"/></svg></button>
    <button aria-label="Navigator"><svg><use href="#i-nav"/></svg></button>
    <button class="fx" aria-label="Functions">f<sub>x</sub></button>
    <span class="handle"></span>
  </aside>
</div>

<footer class="status">
  <div class="s1"><svg viewBox="0 0 12 12"><path d="M.5.5h11v11h-10l-1-1z" fill="#eee" stroke="#888"/><path d="M3 .5v4h6v-4M3.500 11.500v-4h5v4" fill="#fff" stroke="#888"/></svg><span>Sheet 4 of 5</span></div>
  <div class="s2"></div>
  <div class="s3">PageStyle_Dashboard</div>
  <div class="s4">English (USA)</div>
  <div class="s5"></div>
  <div class="s6"><svg viewBox="0 0 20 14"><rect x=".8" y="3.800" width="11" height="6" fill="none" stroke="#4a9bcf"/><path d="M17 2v10M15 1.500h4M15 12.500h4" stroke="#333"/></svg></div>
  <div class="s7"></div>
  <div class="s7"></div>
  <div class="s8">Average: ; Sum: 0</div>
  <div class="s9"><button aria-label="Zoom out">−</button><input type="range" min="0" max="100" value="49" aria-label="Zoom"><button aria-label="Zoom in">+</button></div>
  <div class="s10">100%</div>
</footer>
</body>
</html>
```
FILE: styles.css
```
* { box-sizing: border-box; }
html, body { height: 100%; }
body {
  margin: 0;
  display: flex;
  flex-direction: column;
  overflow: hidden;
  background: #f6f5f4;
  color: #333;
  font: 9px/12px "Noto Sans", sans-serif;
}
button, input { font: inherit; color: inherit; margin: 0; padding: 0; border: 0; background: none; }
button { display: flex; align-items: center; justify-content: center; }
.defs { display: none; }
.gl { font: 8px "Noto Sans", sans-serif; fill: #444; }
.ga { font: 9px "Noto Sans", sans-serif; }
.gs { font: 6px "Noto Sans", sans-serif; fill: #444; }
.b { font-weight: 700; }
.blue { fill: #2a86d4; }
.mag { fill: #b04ab8; }

/* Menu */
.menubar { display: flex; flex: none; height: 17px; padding-left: 6px; gap: 11px; border-bottom: 1px solid #e6e5e3; }
.menubar .close { margin-left: auto; width: 16px; background: #f6f5f4; margin-right: 3px; }
.close svg { width: 6px; height: 6px; }

/* Toolbars */
.toolbar { display: flex; flex: none; align-items: center; height: 27px; padding: 0 0 1px 2px; }
.tb { flex: none; width: 22px; height: 24px; border-radius: 3px; }
.tb svg, .side svg { width: 16px; height: 16px; }
.tb.on { background: #d5d1cd; }
.dd { flex: none; width: 7px; height: 24px; }
.dd::before { content: ""; border: 2px solid transparent; border-top: 3px solid #222; border-bottom: 0; margin-top: 2px; }
.dd.off::before { border-top-color: #bbb; }
.sep { flex: none; width: 6px; height: 20px; background: linear-gradient(#e0dfdd, #e0dfdd) center / 1px 100% no-repeat; }
.sep.tight { width: 4px; }
.bold { font: 700 12px "Noto Sans", sans-serif; }
.italic { font: italic 14px "Liberation Serif", serif; }
.under { font-size: 12px; }
.under span { line-height: 12px; border-bottom: 1px solid #3a93dd; }

.combo { display: flex; flex: none; height: 24px; border: 1px solid #d2cfcb; border-radius: 4px; background: #fff; overflow: hidden; }
.combo input { flex: 1; min-width: 0; padding: 0 0 1px 6px; }
.combo button { width: 23px; border-left: 1px solid #dcdad7; background: #f8f7f6; }
.combo button::before, .expand::before { content: ""; border: 4px solid transparent; border-top-color: #222; border-bottom: 0; }
.font { width: 138px; }
.font input { font-style: italic; }
.size { width: 67px; margin-left: 5px; }
.name { width: 108px; }

/* Work area */
.main { display: flex; flex: 1; min-height: 0; }
.work { display: flex; flex: 1; flex-direction: column; min-width: 0; }
.formula { display: flex; flex: none; align-items: center; height: 29px; padding: 0 0 4px 2px; border-top: 1px solid #eceae8; }
.ft { flex: none; width: 16px; height: 22px; }
.ft svg { width: 14px; height: 14px; }
.ft.wide { width: 18px; }
.fx { font: italic 15px "Liberation Serif", serif; color: #2a86d4; }
.fx sub { font-size: 13px; line-height: 10px; }
.line { flex: 1; min-width: 0; height: 17px; border: 1px solid #d2cfcb; background: #fff; }
.expand { width: 16px; height: 20px; }

.sheetrow { display: flex; flex: 1; min-height: 0; }
.sheet { position: relative; flex: 1; min-width: 0; overflow: hidden; background: #fff; }
.grid { width: 100%; border-collapse: separate; border-spacing: 0; table-layout: fixed; font-family: Carlito, Calibri, Lato, sans-serif; font-size: 9px; line-height: 10px; color: #1f2937; }
.grid td, .grid th { padding: 0; overflow: hidden; white-space: nowrap; text-align: center; }
.grid th { font: 9px/10px "Noto Sans", sans-serif; color: #444; background: #dfdedd; border-right: 1px solid #bdbcba; border-bottom: 1px solid #bdbcba; }
.grid thead th { height: 14px; border-top: 1px solid #bdbcba; font-size: 8px; }
.grid .corner { background: #f6f5f4; border-color: #f6f5f4; }
.grid th.sel { background: #3584e4; border-color: #3584e4; color: #fff; font-weight: 700; }
.w9 { width: 9px; } .w22 { width: 22px; } .w41 { width: 41px; } .w42 { width: 42px; } .w61 { width: 61px; } .w62 { width: 62px; }
.h14 { height: 14px; } .h18 { height: 18px; } .h20 { height: 20px; } .h22 { height: 22px; } .h23 { height: 23px; } .h24 { height: 24px; } .h25 { height: 25px; } .h40 { height: 40px; } .h45 { height: 45px; }
.grid u { text-decoration: underline wavy #d9363e 1px; text-underline-offset: -1px; text-decoration-skip-ink: none; }
.tofu { display: inline-block; border: 1px solid; font-size: 6px; line-height: 6px; padding: 0 1px; margin-right: 1px; vertical-align: 1px; font-weight: 400; }
.grid .cursor { border-right: 1px solid #3584e4; border-bottom: 1px solid #3584e4; }
.grid .title { background: #0f766e; color: #fff; font-size: 14px; line-height: 18px; font-weight: 700; }
.title .tofu { font-size: 9px; line-height: 9px; margin-right: 3px; vertical-align: 0; }
.grid .subtitle { background: #14b8a6; color: #fff; font-size: 11px; line-height: 14px; font-weight: 700; }
.grid .note { background: #f0fdfa; color: #64748b; font-size: 8px; font-style: italic; }
.grid .section { background: #0f766e; color: #fff; font-size: 10px; font-weight: 700; text-align: left; padding-left: 1px; }
.grid .kl { background: #0f766e; color: #fff; font-size: 8px; font-weight: 700; border-top: 1px solid #b9d8d5; border-right: 1px solid #b9d8d5; }
.grid .kv { background: #f0fdfa; color: #0f766e; font-size: 16px; line-height: 18px; font-weight: 700; border: solid #3c8f88; border-width: 1px 1px 2px; }
.grid .pl { background: #f0fdfa; font-weight: 700; text-align: left; padding-left: 1px; }
.grid .pv { background: #f0fdfa; color: #0f766e; font-size: 12px; line-height: 12px; font-weight: 700; border: 1px solid #d5dfdf; }
.grid .ch { background: #0f766e; color: #fff; font-size: 10px; font-weight: 700; border-top: 1px solid #b9d8d5; border-right: 1px solid #b9d8d5; }
.grid .cn { font-weight: 700; text-align: left; padding-left: 1px; }
.grid .cn, .grid .cv { border-right: 1px solid #d1d5db; border-bottom: 1px solid #dfe3e6; }
.alt .cn, .alt .cv { background: #f0fdfa; }

/* Fill handle of the selected cell */
.fill { position: absolute; left: 29px; top: 57px; width: 4px; height: 4px; background: #3584e4; border: solid #fff; border-width: 1px 0 0 1px; }

/* Chart floats over the cells */
.chart { position: absolute; left: 403px; top: 280px; width: 437px; height: 300px; font-family: Carlito, Calibri, Lato, sans-serif; }
.ct { font-size: 15px; font-weight: 700; text-anchor: middle; }
.ax { font-size: 9px; text-anchor: end; fill: #222; }
.ay { font-size: 9px; font-weight: 700; text-anchor: middle; }
.lg { font-size: 9px; fill: #222; }

.vscroll { flex: none; width: 9px; background: #cdcdcd; padding: 5px 2px; border-top: 1px solid #444; }
.vthumb { display: block; height: 37%; border-radius: 3px; background: #7f7f7f; }
.hscroll { display: flex; flex: none; height: 10px; background: #cdcdcd; padding: 2px; margin-right: 9px; justify-content: space-between; }
.hthumb { width: 47.5%; border-radius: 3px; background: #7f7f7f; }
.hend { width: 1px; background: #333; }

/* Sheet tabs */
.tabs { display: flex; flex: none; height: 16px; border-bottom: 1px solid #d0cecb; }
.nav { width: 62px; height: 14px; margin-left: 5px; align-self: center; }
.add { width: 25px; }
.add svg { width: 13px; height: 14px; }
.tab { font-size: 8px; color: #fff; padding: 0 9px; }
.t1 { background: #0f766e; color: #d9f0ed; }
.t2 { background: #14b8a6; color: #123; }
.t3 { background: #1d4ed8; }
.t1, .t2 { padding: 0 10px; }
.t4 { background: #fff; color: #222; font-weight: 700; border-bottom: 2px solid #6d3bd1; padding: 0 8px; }
.t5 { background: #b45309; }

/* Sidebar */
.side { position: relative; display: flex; flex: none; flex-direction: column; width: 39px; border-left: 1px solid #d0cecb; border-bottom: 1px solid #d0cecb; }
.side button { width: 38px; height: 29px; }
.side .fx { font-size: 17px; }
.handle { position: absolute; left: -1px; top: 268px; width: 5px; height: 50px; background: #919191; }
.handle::before { content: ""; position: absolute; left: 1px; top: 23px; border: 2px solid transparent; border-left: 3px solid #fff; border-right: 0; }

/* Status bar */
.status { display: flex; flex: none; height: 17px; font-size: 8px; align-items: center; }
.status > div { display: flex; align-items: center; justify-content: center; height: 13px; border-right: 1px solid #e0dfdd; white-space: nowrap; min-width: 0; }
.status .s1 { flex: 176 1 0; justify-content: flex-start; gap: 10px; padding-left: 6px; }
.s1 svg { width: 11px; height: 11px; }
.s2 { flex: 217 1 0; }
.status .s3 { flex: 202 1 0; justify-content: flex-start; padding-left: 6px; }
.s4 { flex: 172 1 0; }
.s5 { flex: 46 1 0; }
.s6 { flex: 30 1 0; }
.s6 svg { width: 20px; height: 14px; }
.s7 { flex: 20 1 0; }
.s8 { flex: 184 1 0; }
.s9 { flex: 97 1 0; gap: 2px; }
.s9 button { width: 10px; font-size: 14px; line-height: 12px; font-weight: 700; color: #222; }
.s9 input { -webkit-appearance: none; appearance: none; flex: 1; min-width: 0; height: 8px; background: linear-gradient(#999, #999) center / 100% 1px no-repeat; }
.s9 input::-webkit-slider-thumb { -webkit-appearance: none; width: 3px; height: 7px; border: 1px solid #444; background: #fff; }
.status .s10 { flex: 31 1 0; border: 0; }
```
